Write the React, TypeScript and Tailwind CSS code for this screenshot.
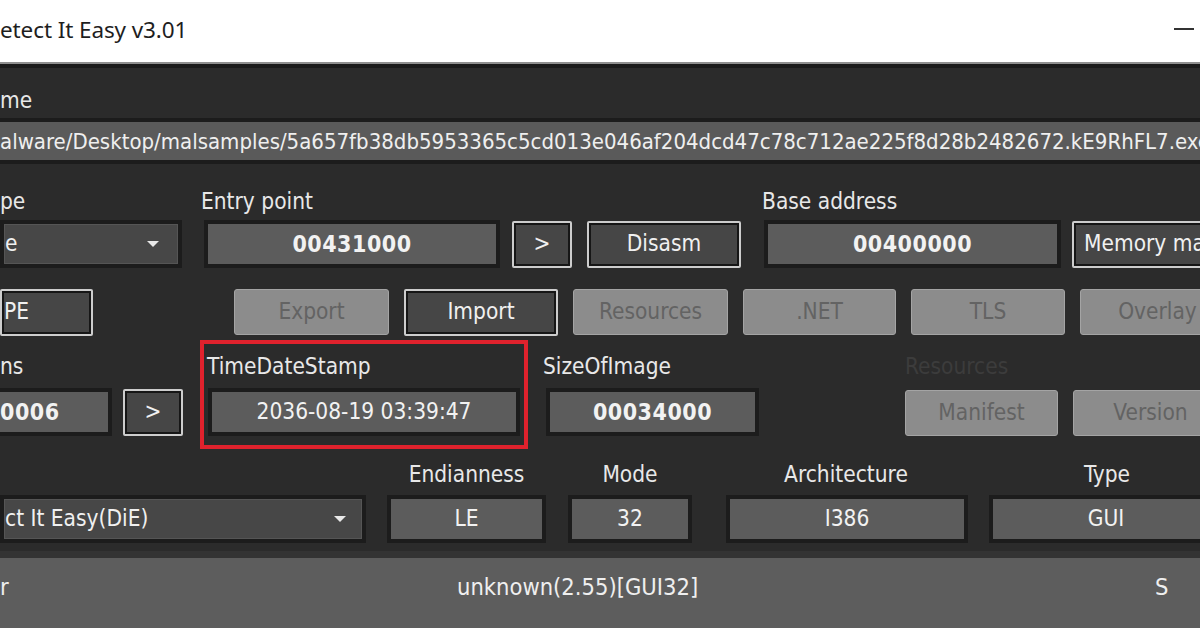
import React from "react";

const ui = "font-['DejaVu_Sans',sans-serif] font-stretch-condensed";

function Frame({ w, className = "", children }: { w: string; className?: string; children?: React.ReactNode }) {
  return (
    <div className={`${w} h-[48px] shrink-0 bg-[#1c1c1c] p-[4px] ${className}`}>
      {children}
    </div>
  );
}

function Field({ w, bold, align = "center", children }: { w: string; bold?: boolean; align?: "center" | "left"; children: React.ReactNode }) {
  return (
    <Frame w={w}>
      <div
        className={`h-full bg-[#5c5c5c] flex items-center ${align === "center" ? "justify-center" : "justify-start"} text-[#f2f2f2] ${
          bold ? "font-bold text-[23px] tracking-[0.5px]" : "text-[22.5px]"
        } whitespace-nowrap overflow-hidden`}
      >
        {children}
      </div>
    </Frame>
  );
}

function Combo({ w, arrowRight, children }: { w: string; arrowRight: string; children: React.ReactNode }) {
  return (
    <Frame w={w}>
      <div className="h-full bg-[#474747] border border-[#555] flex items-center text-[#f0f0f0] text-[22.5px] whitespace-nowrap overflow-hidden relative">
        <span>{children}</span>
        <svg className={`absolute ${arrowRight} top-1/2 -translate-y-1/2`} width="14" height="8" viewBox="0 0 14 8">
          <path d="M1 1 L13 1 L7 7 Z" fill="#e8e8e8" />
        </svg>
      </div>
    </Frame>
  );
}

function Btn({ w, align = "center", children }: { w: string; align?: "center" | "left"; children: React.ReactNode }) {
  return (
    <div className={`${w} h-[47px] shrink-0 border-2 border-[#cdcdcd] rounded-[2px]`}>
      <div
        className={`h-full border-2 border-[#161616] bg-[#464646] flex items-center ${
          align === "center" ? "justify-center" : "justify-start"
        } text-[#f0f0f0] text-[22.5px] whitespace-nowrap overflow-hidden`}
      >
        {children}
      </div>
    </div>
  );
}

function Off({ w, children }: { w: string; children: React.ReactNode }) {
  return (
    <div
      className={`${w} h-[46px] shrink-0 rounded-[3px] border border-[#a4a4a4] bg-[#8c8c8c] flex items-center justify-center text-[#636363] text-[22.5px] whitespace-nowrap overflow-hidden`}
    >
      {children}
    </div>
  );
}

function Label({ className = "", dim, children }: { className?: string; dim?: boolean; children: React.ReactNode }) {
  return (
    <div className={`shrink-0 text-[22.5px] ${dim ? "text-[#3c3c3c]" : "text-[#e8e8e8]"} whitespace-nowrap leading-[26px] ${className}`}>
      {children}
    </div>
  );
}

export default function App() {
  return (
    <div className={`w-[1200px] h-[628px] overflow-hidden bg-[#2b2b2b] flex flex-col ${ui}`}>
      {/* title bar */}
      <div className="h-[62px] shrink-0 bg-white flex items-center justify-between pr-[6px]">
        <span className="font-['Noto_Sans',sans-serif] font-stretch-normal text-[22.5px] text-[#1e1e1e] tracking-[-0.1px] -mt-[2px]">
          etect It Easy v3.01
        </span>
        <span className="w-[20px] h-[2px] bg-[#333] -mt-[4px]" />
      </div>
      <div className="h-[2px] shrink-0 bg-[#8f8f8f]" />
      <div className="h-[4px] shrink-0 bg-[#1b1b1b]" />

      {/* file name */}
      <div className="h-[50px] shrink-0 flex items-end pb-[5px]">
        <Label>me</Label>
      </div>
      <div className="h-[46px] shrink-0 bg-[#1c1c1c] py-[4px]">
        <div className="h-full bg-[#5a5a5a] flex items-center text-[22px] text-[#efefef] whitespace-nowrap overflow-hidden">
          alware/Desktop/malsamples/5a657fb38db5953365c5cd013e046af204dcd47c78c712ae225f8d28b2482672.kE9RhFL7.exe
        </div>
      </div>

      {/* type / entry point / base address labels */}
      <div className="h-[50px] shrink-0 flex items-end">
        <Label className="w-[201px]">pe</Label>
        <Label className="w-[561px]">Entry point</Label>
        <Label>Base address</Label>
      </div>
      <div className="h-[60px] shrink-0 flex items-center">
        <Combo w="w-[182px]" arrowRight="right-[17px]">e</Combo>
        <Frame w="w-[296px] ml-[22px]">
          <div className="h-full bg-[#5c5c5c] flex items-center justify-center text-[#f2f2f2] font-bold text-[23px] tracking-[0.5px]">00431000</div>
        </Frame>
        <div className="ml-[12px]"><Btn w="w-[60px]">&gt;</Btn></div>
        <div className="ml-[15px]"><Btn w="w-[154px]">Disasm</Btn></div>
        <div className="ml-[23px]"><Field w="w-[297px]" bold>00400000</Field></div>
        <div className="ml-[11px]"><Btn w="w-[160px]" align="left"><span className="pl-[8px]">Memory map</span></Btn></div>
      </div>

      {/* directory buttons */}
      <div className="h-[14px] shrink-0" />
      <div className="h-[48px] shrink-0 flex items-center">
        <Btn w="w-[93px]" align="left">PE</Btn>
        <div className="ml-[141px] flex gap-[15px]">
          <Off w="w-[155px]">Export</Off>
          <Btn w="w-[154px]">Import</Btn>
          <Off w="w-[155px]">Resources</Off>
          <Off w="w-[153px]">.NET</Off>
          <Off w="w-[154px]">TLS</Off>
          <Off w="w-[155px]">Overlay</Off>
        </div>
      </div>

      {/* sections / timestamp / size of image / resources */}
      <div className="h-[113px] shrink-0 flex pt-[4px]">
        <div className="w-[200px] shrink-0 flex flex-col pt-[4px]">
          <div className="h-[44px] flex items-end pb-[9px]"><Label>ns</Label></div>
          <div className="flex items-center -ml-[4px]">
            <Field w="w-[116px]" bold align="left">0006</Field>
            <div className="ml-[11px]"><Btn w="w-[60px]">&gt;</Btn></div>
          </div>
        </div>
        <div className="w-[328px] h-[109px] shrink-0 border-[4px] border-[#e0222d] flex flex-col px-[4px]">
          <div className="h-[44px] flex items-end pb-[9px]"><Label className="-ml-[1px]">TimeDateStamp</Label></div>
          <Field w="w-[312px]">2036-08-19 03:39:47</Field>
        </div>
        <div className="w-[377px] shrink-0 flex flex-col pl-[15px] pt-[4px]">
          <div className="h-[44px] flex items-end pb-[9px]"><Label>SizeOfImage</Label></div>
          <Field w="w-[213px] ml-[3px]" bold>00034000</Field>
        </div>
        <div className="flex flex-col pt-[4px]">
          <div className="h-[44px] flex items-end pb-[9px]"><Label dim>Resources</Label></div>
          <div className="flex gap-[15px] mt-[2px]">
            <Off w="w-[153px]">Manifest</Off>
            <Off w="w-[155px]">Version</Off>
          </div>
        </div>
      </div>

      {/* endianness / mode / architecture / type */}
      <div className="h-[38px] shrink-0 flex items-end">
        <div className="w-[387px] shrink-0" />
        <Label className="w-[159px] text-center">Endianness</Label>
        <Label className="w-[168px] text-center">Mode</Label>
        <Label className="w-[264px] text-center">Architecture</Label>
        <Label className="w-[258px] text-center">Type</Label>
      </div>
      <div className="h-[64px] shrink-0 flex items-center">
        <Combo w="w-[366px]" arrowRight="right-[14px]">ct It Easy(DiE)</Combo>
        <div className="ml-[21px]"><Field w="w-[159px]">LE</Field></div>
        <div className="ml-[22px]"><Field w="w-[124px]">32</Field></div>
        <div className="ml-[34px]"><Field w="w-[242px]">I386</Field></div>
        <div className="ml-[21px]"><Field w="w-[234px]">GUI</Field></div>
      </div>
      <div className="h-[7px] shrink-0 bg-[#333]" />

      {/* status line */}
      <div className="flex-1 bg-[#5d5d5d] flex items-start pt-[16px] text-[23.5px] text-[#efefef] leading-[26px]">
        <span className="w-[457px] shrink-0">r</span>
        <span className="w-[698px] shrink-0">unknown(2.55)[GUI32]</span>
        <span>S</span>
      </div>
    </div>
  );
}
